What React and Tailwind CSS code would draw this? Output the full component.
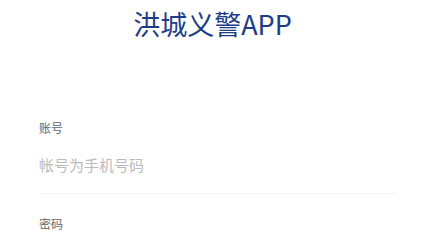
export default function App() {
  return (
    <div className="min-h-screen bg-white font-['Noto_Sans_CJK_SC',sans-serif]">
      <h1 className="pt-[6px] pr-[10px] text-center text-[27px] leading-[36px] font-normal text-[#1d3d87]">
        洪城义警APP
      </h1>

      <form className="mt-[78px] px-[39px]">
        <div className="border-b border-[#f2f2f2] pb-[17px]">
          <label className="block text-[12px] leading-[16px] text-[#666]">账号</label>
          <input
            placeholder="帐号为手机号码"
            className="mt-[19px] w-full text-[15px] leading-[20px] outline-none placeholder:text-[#bbb]"
          />
        </div>
        <div className="pt-[22px]">
          <label className="block text-[12px] leading-[16px] text-[#666]">密码</label>
        </div>
      </form>
    </div>
  );
}
